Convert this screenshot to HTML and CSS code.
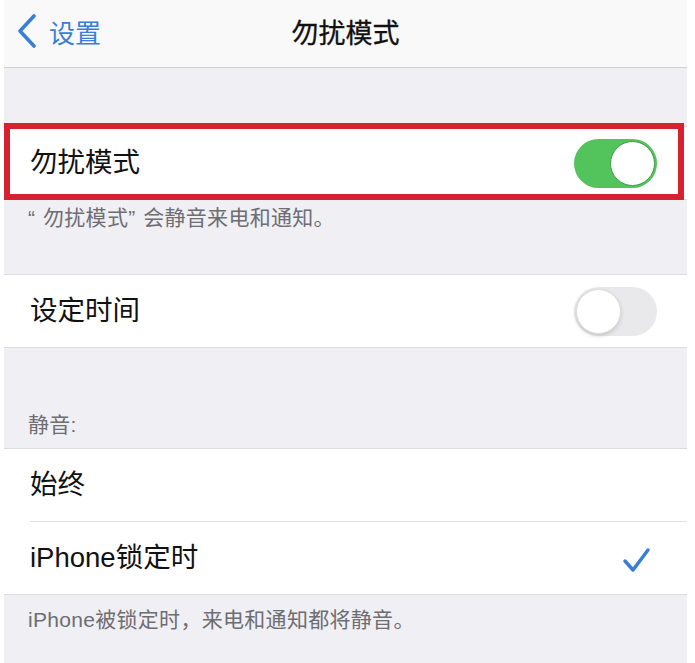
FILE: index.html
```html
<!DOCTYPE html>
<html lang="zh-CN">
<head>
  <meta charset="UTF-8" />
  <meta name="viewport" content="width=device-width, initial-scale=1" />
  <title>勿扰模式</title>
  <link rel="stylesheet" href="styles.css">
</head>
<body>
  <div class="screen">
    <header class="navbar">
      <a class="back" href="#">
        <svg class="chevron" width="20" height="34" viewBox="0 0 20 34">
          <polyline points="17,2 3,17 17,32" fill="none" stroke="#3a7fd6" stroke-width="3.6" stroke-linecap="round" stroke-linejoin="round" />
        </svg>
        <span>设置</span>
      </a>
      <h1 class="title">勿扰模式</h1>
      <div></div>
    </header>

    <div class="spacer"></div>

    <section class="group">
      <div class="cell highlighted">
        <span class="label">勿扰模式</span>
        <span class="switch on"><span class="knob"></span></span>
      </div>
    </section>
    <p class="note note-first"><span class="quote">“</span>勿扰模式<span class="quote">”</span>会静音来电和通知。</p>

    <section class="group">
      <div class="cell">
        <span class="label">设定时间</span>
        <span class="switch"><span class="knob"></span></span>
      </div>
    </section>

    <p class="group-header">静音:</p>

    <section class="group">
      <div class="cell">
        <span class="label">始终</span>
      </div>
      <div class="cell">
        <span class="label">iPhone锁定时</span>
        <svg class="check" width="30" height="28" viewBox="0 0 30 28">
          <polyline points="3,15 11,24 26,4" fill="none" stroke="#3a7fd6" stroke-width="3.5" stroke-linecap="round" stroke-linejoin="round" />
        </svg>
      </div>
    </section>
    <p class="note note-last">iPhone被锁定时，来电和通知都将静音。</p>
  </div>
</body>
</html>
```

FILE: styles.css
```css
body {
  margin: 0;
  background: #fff;
  font-family: "Liberation Sans", "Noto Sans CJK SC", sans-serif;
  color: #111;
}

.screen {
  margin: 0 8px 0 4px;
  background: #efeff4;
  height: 663px;
}

.navbar {
  display: grid;
  grid-template-columns: 1fr auto 1fr;
  align-items: center;
  height: 62px;
  padding-bottom: 5px;
  background: #f9f9f9;
  border-bottom: 1px solid #cfcfd3;
}

.back {
  display: flex;
  align-items: center;
  gap: 12px;
  padding-left: 13px;
  color: #3a7fd6;
  font-size: 26px;
  text-decoration: none;
}

.chevron {
  display: block;
}

.title {
  margin: 0;
  font-size: 27px;
  font-weight: 400;
  -webkit-text-stroke: 0.3px #111;
  color: #111;
}

.spacer {
  height: 58px;
}

.group {
  background: #fff;
  border-top: 1px solid #dcdce0;
  border-bottom: 1px solid #dcdce0;
}

.cell {
  display: flex;
  align-items: center;
  justify-content: space-between;
  height: 72px;
  padding: 0 30px 0 26px;
  font-size: 27.5px;
}

.cell + .cell {
  margin-left: 26px;
  padding-left: 0;
  border-top: 1px solid #e2e2e6;
}

.label {
  line-height: 1;
}

.highlighted {
  position: relative;
}

.highlighted::after {
  content: '';
  position: absolute;
  top: -4px;
  left: 0;
  right: 3px;
  bottom: -1px;
  border: 6px solid #d6222e;
}

.switch {
  display: flex;
  width: 83px;
  height: 49px;
  padding: 2px;
  box-sizing: border-box;
  border-radius: 25px;
  background: #e9e9eb;
}

.switch .knob {
  width: 45px;
  height: 45px;
  box-sizing: border-box;
  border-radius: 50%;
  background: #fff;
  border: 1px solid #dcdcdc;
  box-shadow: 0 2px 4px rgba(0, 0, 0, 0.15);
}

.switch.on {
  justify-content: flex-end;
  background: #53c35b;
}

.switch.on .knob {
  border: 1.5px solid #3f9e48;
  box-shadow: none;
}

.check {
  display: block;
  margin-right: 5px;
  margin-top: 3px;
}

.note,
.group-header {
  margin: 0;
  padding: 0 24px;
  font-size: 21px;
  line-height: 24px;
  letter-spacing: 0.3px;
  color: #6d6d72;
}

.quote {
  display: inline-block;
  width: 15px;
}

.note-first {
  padding-top: 6px;
  padding-bottom: 44px;
}

.note-last {
  padding-top: 13px;
}

.group-header {
  padding-top: 65px;
  padding-bottom: 11px;
}
```
